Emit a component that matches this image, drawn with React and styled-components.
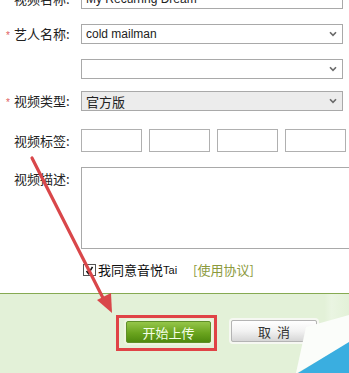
import React from "react";
import styled, { createGlobalStyle } from "styled-components";

const GlobalStyle = createGlobalStyle`
  html, body {
    margin: 0;
    padding: 0;
    background: #fff;
  }
  body {
    font-family: "Noto Sans CJK SC", "Liberation Sans", sans-serif;
  }
`;

const Page = styled.div`
  position: relative;
  width: 349px;
  height: 373px;
  overflow: hidden;
  background: #fff;
`;

const Form = styled.div`
  display: grid;
  grid-template-columns: 81px 1fr;
  align-items: center;
  align-content: start;
  margin-top: -11px;
  height: 305px;
  border-bottom: 1px solid #86aa52;
  box-sizing: border-box;
`;

const Label = styled.div`
  position: relative;
  padding-left: 14px;
  font-size: 13px;
  line-height: 18px;
  color: #222;
  white-space: nowrap;
  align-self: ${(p) => (p.$top ? "start" : "center")};
  padding-top: ${(p) => (p.$top ? "3px" : "0")};
  margin-top: ${(p) => p.$mt || 0}px;
`;

const Star = styled.span`
  position: absolute;
  left: 6px;
  top: 50%;
  transform: translateY(-40%);
  color: #e06060;
  font-size: 10px;
  font-family: "Liberation Sans", sans-serif;
`;

const Cell = styled.div`
  margin-top: ${(p) => p.$mt || 0}px;
  display: flex;
  gap: 7px;
`;

const TextBox = styled.div`
  box-sizing: border-box;
  width: 262px;
  height: 20px;
  border: 1px solid #a9a9a9;
  background: #fff;
  font-family: "Liberation Sans", sans-serif;
  font-size: 12px;
  line-height: 18px;
  padding-left: 4px;
  color: #222;
`;

const Select = styled.div`
  box-sizing: border-box;
  width: 262px;
  height: 20px;
  border: 1px solid #a9a9a9;
  background: ${(p) => (p.$gray ? "#ececec" : "#fff")};
  display: flex;
  align-items: center;
  justify-content: space-between;
  padding: 0 5px 0 4px;
  font-family: ${(p) =>
    p.$cjk ? `"Noto Sans CJK SC", sans-serif` : `"Liberation Sans", sans-serif`};
  font-size: ${(p) => (p.$cjk ? "13px" : "12px")};
  color: #222;
`;

const Chevron = () => (
  <svg width="8" height="6" viewBox="0 0 8 6">
    <path d="M1 1.2 L4 4.4 L7 1.2" fill="none" stroke="#6a6a6a" strokeWidth="1.6" />
  </svg>
);

const TagBox = styled.div`
  box-sizing: border-box;
  width: 61px;
  height: 23px;
  border: 1px solid #b0b0b0;
  flex-shrink: 0;
`;

const TextArea = styled.div`
  box-sizing: border-box;
  width: 290px;
  height: 82px;
  border: 1px solid #a9a9a9;
  border-right: none;
`;

const AgreeRow = styled.div`
  grid-column: 2;
  margin-top: 12px;
  margin-left: 2px;
  display: flex;
  align-items: center;
  font-size: 13px;
  line-height: 18px;
  color: #111;
`;

const Check = styled.span`
  box-sizing: border-box;
  width: 13px;
  height: 12px;
  border: 1px solid #555;
  margin-right: 2px;
  display: inline-flex;
  align-items: center;
  justify-content: center;
`;

const Brand = styled.span`
  font-family: "Liberation Sans", sans-serif;
  font-size: 11px;
`;

const Link = styled.span`
  margin-left: 16px;
  color: #8c9a3c;
`;

const Footer = styled.div`
  height: 79px;
  background: linear-gradient(90deg, #e3f1d8 0%, #e3f1d8 93%, #eaf5e2 95%, #e3f1d8 100%);
  display: flex;
  align-items: flex-start;
  padding: 21px 0 0 116px;
  box-sizing: border-box;
  gap: 14px;
`;

const Highlight = styled.div`
  border: 3px solid #e04346;
  padding: 3px 3px 5px 7px;
  display: flex;
`;

const Button = styled.div`
  box-sizing: border-box;
  width: ${(p) => p.$w}px;
  height: 22px;
  display: flex;
  align-items: center;
  justify-content: center;
  font-size: 13px;
  border-radius: 2px;
  letter-spacing: ${(p) => (p.$green ? "0" : "6px")};
  padding-left: ${(p) => (p.$green ? "0" : "6px")};
  color: ${(p) => (p.$green ? "#f4ffe8" : "#333")};
  background: ${(p) =>
    p.$green
      ? "linear-gradient(#95c64a, #6aa41e 55%, #4f8a0e)"
      : "linear-gradient(#ffffff, #f2f2f2 50%, #d6d6d6)"};
  border: 1px solid ${(p) => (p.$green ? "#5f8f28" : "#b4b4b4")};
  box-shadow: 0 0 0 2px ${(p) => (p.$green ? "#eef5df" : "#f6f8f2")};
`;

const CancelWrap = styled.div`
  margin-top: 5px;
`;

const Overlay = styled.svg`
  position: absolute;
  left: 0;
  top: 0;
  pointer-events: none;
`;

export default function App() {
  return (
    <Page>
      <GlobalStyle />
      <Form>
        <Label>视频名称:</Label>
        <Cell>
          <TextBox>My Recurring Dream</TextBox>
        </Cell>

        <Label $mt={15}>
          <Star>*</Star>艺人名称:
        </Label>
        <Cell $mt={15}>
          <Select>
            cold mailman
            <Chevron />
          </Select>
        </Cell>

        <Label $mt={15} />
        <Cell $mt={15}>
          <Select>
            <span />
            <Chevron />
          </Select>
        </Cell>

        <Label $mt={12}>
          <Star>*</Star>视频类型:
        </Label>
        <Cell $mt={12}>
          <Select $gray $cjk>
            官方版
            <Chevron />
          </Select>
        </Cell>

        <Label $mt={18}>视频标签:</Label>
        <Cell $mt={18}>
          <TagBox />
          <TagBox />
          <TagBox />
          <TagBox />
        </Cell>

        <Label $top $mt={15}>视频描述:</Label>
        <Cell $mt={15}>
          <TextArea />
        </Cell>

        <AgreeRow>
          <Check>
            <svg width="9" height="9" viewBox="0 0 9 9">
              <path d="M1.5 5 L3.5 7.5 L7.5 0.8" fill="none" stroke="#111" strokeWidth="1.6" />
            </svg>
          </Check>
          我同意音悦<Brand>Tai</Brand>
          <Link>[使用协议]</Link>
        </AgreeRow>
      </Form>

      <Footer>
        <Highlight>
          <Button $green $w={85}>开始上传</Button>
        </Highlight>
        <CancelWrap>
          <Button $w={86}>取消</Button>
        </CancelWrap>
      </Footer>

      <Overlay width="349" height="373" viewBox="0 0 349 373">
        <polygon points="306,327 349,315 349,343 297,373 296,373" fill="#fbfdfa" />
        <polygon points="298,373 349,342 349,373" fill="#3aaee0" />
        <line x1="32" y1="158" x2="104" y2="300" stroke="#d9474a" strokeWidth="3.2" strokeLinecap="round" />
        <polygon points="97,300 112,313 111,293" fill="#d9474a" />
      </Overlay>
    </Page>
  );
}
